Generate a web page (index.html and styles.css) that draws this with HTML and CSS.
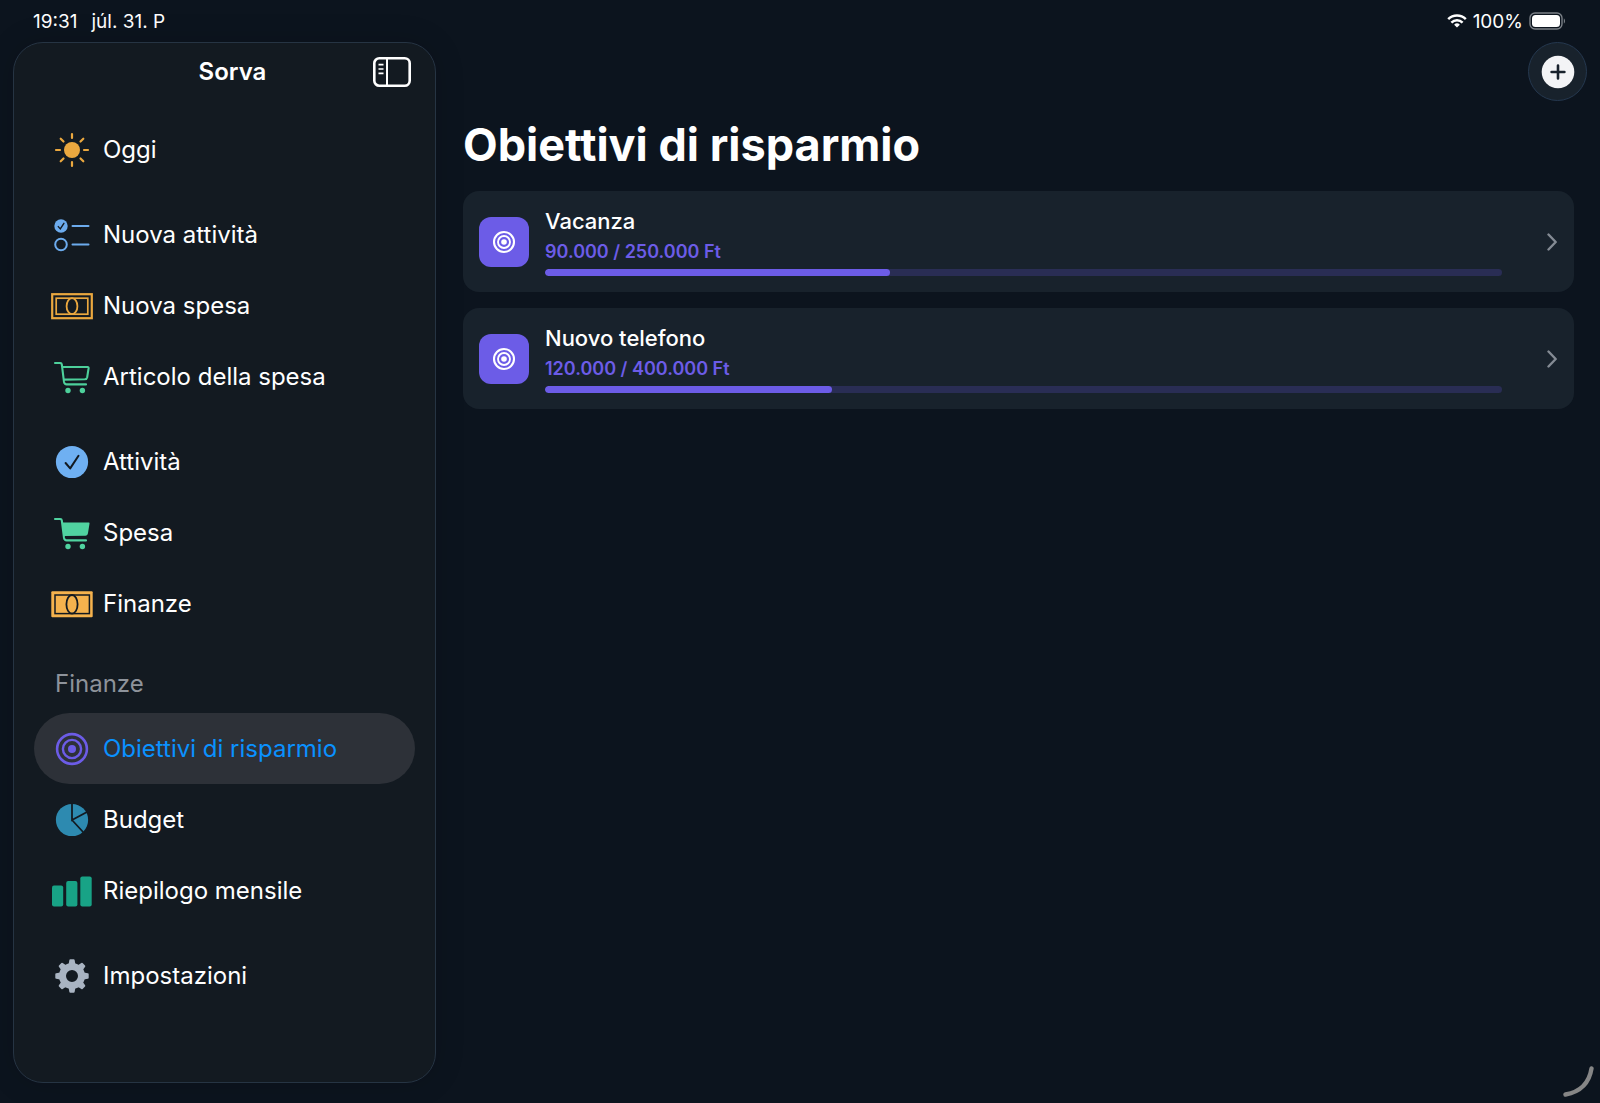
FILE: index.html
```
<!DOCTYPE html>
<html lang="it">
<head>
    <meta charset="UTF-8">
    <meta name="viewport" content="width=device-width, initial-scale=1.0">
    <title>Sorva</title>
    <link rel="stylesheet" href="styles.css">
</head>
<body>

    <div class="status-bar">
        <div class="status-group">
            <span>19:31</span>
            <span>júl. 31. P</span>
        </div>
        <div class="status-right">
            <svg class="wifi" width="20" height="14" viewBox="0 0 20 14">
                <g fill="none" stroke="#fff" stroke-width="2.5">
                    <path d="M1.2 5.2a12.6 12.6 0 0 1 17.6 0"/>
                    <path d="M4.4 8.6a8 8 0 0 1 11.2 0"/>
                </g>
                <path d="M10 13.6l-2.9-2.9a4.2 4.2 0 0 1 5.8 0z" fill="#fff"/>
            </svg>
            <span>100%</span>
            <svg width="37" height="18" viewBox="0 0 37 18">
                <rect x="1" y="1" width="32" height="16" rx="5" fill="none" stroke="#7b8087" stroke-width="1.4"/>
                <rect x="3" y="3" width="28" height="12" rx="3.5" fill="#fff"/>
                <path d="M34.8 6.5c1.6.6 1.6 4.4 0 5z" fill="#7b8087"/>
            </svg>
        </div>
    </div>

    <div class="layout">
        <aside class="sidebar">
            <div class="sidebar-header">
                <span class="sidebar-title">Sorva</span>
                <button class="toggle" type="button" aria-label="Barra laterale">
                    <svg width="38" height="30" viewBox="0 0 38 30" fill="none" stroke="#fff">
                        <rect x="1.3" y="1.3" width="35.4" height="27.4" rx="5" stroke-width="2.6"/>
                        <path d="M14 1.5v27" stroke-width="2"/>
                        <path d="M5.5 7.6h5M5.5 12h5M5.5 16.3h5" stroke-width="1.7"/>
                    </svg>
                </button>
            </div>

            <nav>
                <div class="group">
                    <a class="item" href="#">
                        <svg class="icon" viewBox="0 0 42 36">
                            <circle cx="21" cy="18" r="8" fill="#eba83f"/>
                            <path d="M21 2v4M21 30v4M5 18h4M33 18h4M9.7 6.7l2.8 2.8M29.5 26.5l2.8 2.8M9.7 29.3l2.8-2.8M29.5 9.5l2.8-2.8" fill="none" stroke="#eba83f" stroke-width="2.2" stroke-linecap="round"/>
                        </svg>
                        Oggi
                    </a>
                </div>

                <div class="group">
                    <a class="item" href="#">
                        <svg class="icon" viewBox="0 0 42 36" fill="none" stroke="#6cabed" stroke-width="2" stroke-linecap="round">
                            <circle cx="10" cy="9" r="6.7" fill="#6cabed" stroke="none"/>
                            <path d="M7.3 9.6l2 2.3 3.6-5.6" stroke="#131a21" stroke-width="1.4"/>
                            <circle cx="10" cy="27.5" r="5.8"/>
                            <path d="M21.5 9h16M21.5 27.5h16"/>
                        </svg>
                        Nuova attività
                    </a>
                    <a class="item" href="#">
                        <svg class="icon" viewBox="0 0 42 36" fill="none" stroke="#eba83f">
                            <rect x="1.2" y="6.2" width="39.6" height="24" stroke-width="2.2"/>
                            <rect x="5.2" y="10.2" width="31.6" height="16" stroke-width="1.7"/>
                            <ellipse cx="21" cy="18.2" rx="5.4" ry="8" stroke-width="1.8"/>
                        </svg>
                        Nuova spesa
                    </a>
                    <a class="item" href="#">
                        <svg class="icon" viewBox="0 0 42 36">
                            <path d="M4 4h5.2c1 0 1.5.5 1.6 1.4l2.2 17.5c.3 1.7 1 2.5 2.6 2.5H35M11.3 8h25.3c.8 0 1.1.4 1 1.2l-1.4 9c-.3 1.4-1 2-2.4 2.1L13 20.6" fill="none" stroke="#4dd09b" stroke-width="2.1" stroke-linecap="round" stroke-linejoin="round"/>
                            <circle cx="17" cy="31.5" r="2.7" fill="#4dd09b"/>
                            <circle cx="31.4" cy="31.5" r="2.7" fill="#4dd09b"/>
                        </svg>
                        Articolo della spesa
                    </a>
                </div>

                <div class="group">
                    <a class="item" href="#">
                        <svg class="icon" viewBox="0 0 42 36">
                            <circle cx="21" cy="18" r="16.1" fill="#6fb0f2"/>
                            <path d="M14.6 19l4.6 5.4 8.3-12.6" fill="none" stroke="#131a21" stroke-width="2" stroke-linecap="round" stroke-linejoin="round"/>
                        </svg>
                        Attività
                    </a>
                    <a class="item" href="#">
                        <svg class="icon" viewBox="0 0 42 36">
                            <path d="M11.3 7.5h26.2c.8 0 1.2.4 1 1.2L37 18c-.3 1.8-1.2 2.6-2.6 2.7L13 21z" fill="#50d3a0"/>
                            <path d="M4 4h5.2c1 0 1.5.5 1.6 1.4l2.2 17.5c.3 1.7 1 2.5 2.6 2.5H35" fill="none" stroke="#50d3a0" stroke-width="2.1" stroke-linecap="round" stroke-linejoin="round"/>
                            <circle cx="17" cy="31.5" r="2.7" fill="#50d3a0"/>
                            <circle cx="31.4" cy="31.5" r="2.7" fill="#50d3a0"/>
                        </svg>
                        Spesa
                    </a>
                    <a class="item" href="#">
                        <svg class="icon" viewBox="0 0 42 36">
                            <rect x="0.3" y="5.2" width="41.4" height="26" rx="1" fill="#f5b24d"/>
                            <g fill="none" stroke="#131a21" stroke-width="1.5">
                                <rect x="4" y="9" width="34.4" height="18.6"/>
                                <ellipse cx="21" cy="18.3" rx="5.6" ry="9.3" stroke-width="1.8"/>
                            </g>
                        </svg>
                        Finanze
                    </a>
                </div>

                <h2 class="section">Finanze</h2>
                <div class="group">
                    <a class="item active" href="#" aria-current="page">
                        <svg class="icon" viewBox="0 0 42 36" fill="none" stroke="#6c5ce7">
                            <circle cx="21" cy="18" r="14.9" stroke-width="2.6"/>
                            <circle cx="21" cy="18" r="9.1" stroke-width="2.4"/>
                            <circle cx="21" cy="18" r="4" fill="#6c5ce7" stroke="none"/>
                        </svg>
                        Obiettivi di risparmio
                    </a>
                    <a class="item" href="#">
                        <svg class="icon" viewBox="0 0 42 36">
                            <circle cx="21" cy="18" r="16.1" fill="#2d8ab0"/>
                            <path d="M21 1v17l15-8M21 18l11.5 12.5" fill="none" stroke="#131a21" stroke-width="1.8"/>
                        </svg>
                        Budget
                    </a>
                    <a class="item" href="#">
                        <svg class="icon" viewBox="0 0 42 36" fill="#18a386">
                            <rect x="1" y="12.5" width="11.2" height="21" rx="2"/>
                            <rect x="15.2" y="8" width="11.2" height="25.5" rx="2"/>
                            <rect x="29.3" y="3.5" width="11.4" height="30" rx="2"/>
                        </svg>
                        Riepilogo mensile
                    </a>
                </div>

                <div class="group">
                    <a class="item" href="#">
                        <svg class="icon" viewBox="0 0 42 36">
                            <circle cx="21" cy="18" r="9.5" fill="none" stroke="#a9b4c2" stroke-width="7"/>
                            <g fill="#a9b4c2" stroke="#a9b4c2" stroke-width="2" stroke-linejoin="round">
                                <path id="tooth" d="M18.6 6.5l.7-4.2h3.4l.7 4.2z"/>
                                <use href="#tooth" transform="rotate(45 21 18)"/>
                                <use href="#tooth" transform="rotate(90 21 18)"/>
                                <use href="#tooth" transform="rotate(135 21 18)"/>
                                <use href="#tooth" transform="rotate(180 21 18)"/>
                                <use href="#tooth" transform="rotate(225 21 18)"/>
                                <use href="#tooth" transform="rotate(270 21 18)"/>
                                <use href="#tooth" transform="rotate(315 21 18)"/>
                            </g>
                        </svg>
                        Impostazioni
                    </a>
                </div>
            </nav>
        </aside>

        <main class="content">
            <div class="toolbar">
                <button class="add" type="button" aria-label="Aggiungi">
                    <svg width="34" height="34" viewBox="0 0 34 34">
                        <circle cx="17" cy="17" r="16.3" fill="#f3f4f6"/>
                        <path d="M17 10.6v12.8M10.6 17h12.8" stroke="#18222c" stroke-width="2.6" stroke-linecap="round"/>
                    </svg>
                </button>
            </div>

            <h1>Obiettivi di risparmio</h1>

            <div class="goals">
                <a class="goal" href="#">
                    <span class="goal-icon">
                        <svg width="24" height="24" viewBox="0 0 24 24" fill="none" stroke="#fff">
                            <circle cx="12" cy="12" r="10" stroke-width="2.1"/>
                            <circle cx="12" cy="12" r="6" stroke-width="1.9"/>
                            <circle cx="12" cy="12" r="2.8" fill="#fff" stroke="none"/>
                        </svg>
                    </span>
                    <span class="goal-body">
                        <span class="goal-name">Vacanza</span>
                        <span class="goal-amount">90.000 / 250.000 Ft</span>
                        <span class="track"><span class="fill" style="width: 36%"></span></span>
                    </span>
                    <svg class="chevron" width="10" height="18" viewBox="0 0 10 18">
                        <path d="M1.5 1.5L8.7 9l-7.2 7.5" fill="none" stroke="#848b94" stroke-width="2.4" stroke-linecap="round" stroke-linejoin="round"/>
                    </svg>
                </a>

                <a class="goal" href="#">
                    <span class="goal-icon">
                        <svg width="24" height="24" viewBox="0 0 24 24" fill="none" stroke="#fff">
                            <circle cx="12" cy="12" r="10" stroke-width="2.1"/>
                            <circle cx="12" cy="12" r="6" stroke-width="1.9"/>
                            <circle cx="12" cy="12" r="2.8" fill="#fff" stroke="none"/>
                        </svg>
                    </span>
                    <span class="goal-body">
                        <span class="goal-name">Nuovo telefono</span>
                        <span class="goal-amount">120.000 / 400.000 Ft</span>
                        <span class="track"><span class="fill" style="width: 30%"></span></span>
                    </span>
                    <svg class="chevron" width="10" height="18" viewBox="0 0 10 18">
                        <path d="M1.5 1.5L8.7 9l-7.2 7.5" fill="none" stroke="#848b94" stroke-width="2.4" stroke-linecap="round" stroke-linejoin="round"/>
                    </svg>
                </a>
            </div>
        </main>
    </div>

    <!-- Maniglia di ridimensionamento della finestra -->
    <svg class="corner" width="32" height="32" viewBox="0 0 32 32">
        <path d="M28.5 2.5Q25 24.5 2.5 28.5" fill="none" stroke="#868686" stroke-width="4.4" stroke-linecap="round"/>
    </svg>

</body>
</html>
```
FILE: styles.css
```
* {
    box-sizing: border-box;
}

body {
    font-family: Inter, "Liberation Sans", sans-serif;
    margin: 0;
    min-height: 100vh;
    display: flex;
    flex-direction: column;
    background: #0c141e;
    color: #fff;
}

a {
    color: inherit;
    text-decoration: none;
}

button {
    padding: 0;
    border: none;
    background: none;
    cursor: pointer;
}

svg {
    display: block;
    flex-shrink: 0;
}

/* Barra di stato */
.status-bar {
    height: 42px;
    padding: 0 34px 0 33px;
    display: flex;
    justify-content: space-between;
    align-items: center;
    font-size: 19px;
    font-weight: 400;
}

.status-group {
    display: flex;
    gap: 14px;
}

.status-right {
    display: flex;
    align-items: center;
    gap: 6px;
}

.layout {
    flex: 1;
    display: flex;
    padding: 0 13px 20px;
}

/* Barra laterale */
.sidebar {
    width: 423px;
    flex-shrink: 0;
    padding: 0 20px;
    background: #131a21;
    border: 1px solid #263443;
    border-radius: 30px;
    box-shadow: 0 0 30px rgba(0, 0, 0, 0.15);
}

.sidebar-header {
    height: 57px;
    padding: 0 4px;
    display: grid;
    grid-template-columns: 38px 1fr 38px;
    align-items: center;
}

.sidebar-title {
    grid-column: 2;
    justify-self: center;
    padding-left: 16px;
    font-size: 24px;
    font-weight: 600;
}

nav {
    padding-top: 14px;
}

.group + .group {
    margin-top: 14px;
}

.item {
    height: 71px;
    padding: 0 17px;
    display: flex;
    align-items: center;
    gap: 10px;
    border-radius: 36px;
    font-size: 24px;
}

.item.active {
    background: #2d3138;
    color: #0a91ff;
}

.icon {
    width: 42px;
    height: 36px;
}

.section {
    height: 74px;
    margin: 0;
    padding: 14px 21px 0;
    display: flex;
    align-items: center;
    color: #8e939b;
    font-size: 24px;
    font-weight: 400;
}

/* Contenuto */
.content {
    flex: 1;
    min-width: 0;
}

.toolbar {
    display: flex;
    justify-content: flex-end;
}

.add {
    width: 59px;
    height: 59px;
    display: flex;
    align-items: center;
    justify-content: center;
    background: #18222c;
    border: 1px solid #25384f;
    border-radius: 50%;
}

h1 {
    margin: 16px 27px 18px;
    font-size: 45px;
    line-height: 56px;
    font-weight: 700;
}

.goals {
    padding: 0 13px 0 27px;
    display: flex;
    flex-direction: column;
    gap: 16px;
}

.goal {
    min-height: 101px;
    padding: 0 17px 0 16px;
    display: flex;
    align-items: center;
    gap: 16px;
    background: #18222c;
    border-radius: 16px;
}

.goal-icon {
    width: 50px;
    height: 50px;
    flex-shrink: 0;
    display: flex;
    align-items: center;
    justify-content: center;
    background: #6c5ce7;
    border-radius: 12px;
}

.goal-body {
    flex: 1;
    display: flex;
    flex-direction: column;
}

.goal-name {
    font-size: 22px;
    line-height: 28px;
    font-weight: 500;
}

.goal-amount {
    color: #6c5ce7;
    font-size: 18px;
    line-height: 34px;
    font-weight: 600;
}

.track {
    height: 7px;
    display: block;
    overflow: hidden;
    background: #292d54;
    border-radius: 4px;
}

.fill {
    height: 100%;
    display: block;
    background: #6c5ce7;
    border-radius: 4px;
}

.chevron {
    margin-left: 29px;
}

.corner {
    position: fixed;
    right: 5px;
    bottom: 5px;
}
```
